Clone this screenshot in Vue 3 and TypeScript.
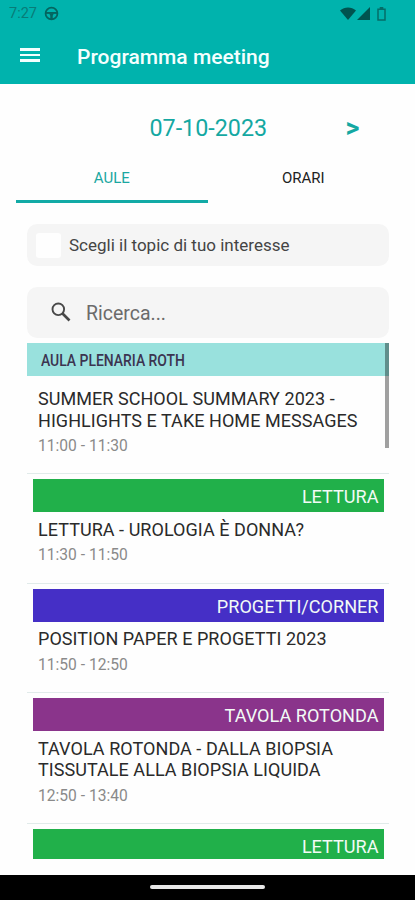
<script setup lang="ts">
import { ref } from 'vue'

interface Session {
  category?: string
  tone?: 'green' | 'blue' | 'purple'
  title: string[]
  time: string
}

const date = ref('07-10-2023')
const activeTab = ref('AULE')
const query = ref('')
const tabs = ['AULE', 'ORARI']

const sessions: Session[] = [
  { title: ['SUMMER SCHOOL SUMMARY 2023 -', 'HIGHLIGHTS E TAKE HOME MESSAGES'], time: '11:00 - 11:30' },
  { category: 'LETTURA', tone: 'green', title: ['LETTURA - UROLOGIA È DONNA?'], time: '11:30 - 11:50' },
  { category: 'PROGETTI/CORNER', tone: 'blue', title: ['POSITION PAPER E PROGETTI 2023'], time: '11:50 - 12:50' },
  { category: 'TAVOLA ROTONDA', tone: 'purple', title: ['TAVOLA ROTONDA - DALLA BIOPSIA', 'TISSUTALE ALLA BIOPSIA LIQUIDA'], time: '12:50 - 13:40' },
  { category: 'LETTURA', tone: 'green', title: [], time: '' },
]
</script>

<template>
  <div class="screen">
    <header class="top">
      <div class="status">
        <span class="clock">7:27</span>
        <svg class="wheel" viewBox="0 0 16 16" width="15" height="15">
          <circle cx="8" cy="8" r="6.3" fill="none" stroke="currentColor" stroke-width="1.9" />
          <path d="M2 7.4h12" fill="none" stroke="currentColor" stroke-width="2" />
          <path d="M5.5 8h5L9.3 10.5V14H6.7V10.5Z" fill="currentColor" />
        </svg>
        <span class="spacer"></span>
        <svg class="wifi" viewBox="0 0 16 13" width="16" height="13">
          <path d="M0 3.6C4.6-.6 11.4-.6 16 3.6L8 13Z" fill="currentColor" />
        </svg>
        <svg class="signal" viewBox="0 0 13 13" width="13" height="13">
          <path d="M13 0V13H0Z" fill="currentColor" />
        </svg>
        <svg class="battery" viewBox="0 0 9 14" width="9" height="14">
          <path d="M1 2.2H8V13H1Z" fill="none" stroke="currentColor" stroke-width="1.5" />
          <path d="M2.7 0H6.3V2H2.7Z" fill="currentColor" />
        </svg>
      </div>
      <div class="bar">
        <button class="menu" aria-label="Menu"><i></i><i></i><i></i></button>
        <h1>Programma meeting</h1>
      </div>
    </header>

    <main>
      <div class="date-row">
        <span class="date">{{ date }}</span>
        <button class="next">&gt;</button>
      </div>

      <nav class="tabs">
        <button v-for="t in tabs" :key="t" class="tab" :class="{ active: t === activeTab }" @click="activeTab = t">
          {{ t }}
        </button>
      </nav>

      <div class="topic">
        <span class="box"></span>
        <span class="topic-text">Scegli il topic di tuo interesse</span>
      </div>

      <label class="search">
        <svg viewBox="0 0 20 20" width="20" height="20">
          <circle cx="7.3" cy="7.3" r="5.8" fill="none" stroke="currentColor" stroke-width="1.9" />
          <path d="M11.5 11.5L18.5 18.5" stroke="currentColor" stroke-width="2.6" />
        </svg>
        <input v-model="query" placeholder="Ricerca..." />
      </label>

      <section class="list">
        <div class="room"><span>AULA PLENARIA ROTH</span></div>
        <article v-for="(s, i) in sessions" :key="i" class="session" :class="{ first: !s.category }">
          <div v-if="s.category" class="category" :class="s.tone">{{ s.category }}</div>
          <div class="title">
            <div v-for="(line, n) in s.title" :key="n">{{ line }}</div>
          </div>
          <div class="time">{{ s.time }}</div>
        </article>
        <div class="scrollbar"></div>
      </section>
    </main>

    <footer class="system"><span></span></footer>
  </div>
</template>

<style>
body {
  margin: 0;
  background: #fff;
}
</style>

<style scoped>
.screen {
  width: 415px;
  height: 900px;
  display: flex;
  flex-direction: column;
  overflow: hidden;
  background: #fefefe;
  font-family: Roboto, "Liberation Sans", sans-serif;
}
button {
  border: 0;
  padding: 0;
  background: none;
  font-family: inherit;
}
.top {
  height: 84px;
  flex: none;
  background: #00b3ad;
}
.status {
  display: flex;
  align-items: center;
  height: 27px;
  padding: 0 29px 0 9px;
  color: #00534f;
}
.clock {
  font-size: 14.5px;
  color: #087c78;
  width: 35px;
}
.wheel { color: #04655f; }
.spacer { flex: 1; }
.signal { margin-left: 1px; }
.battery { margin-left: 7px; color: #046d68; }
.bar {
  display: flex;
  align-items: center;
  height: 57px;
  padding-left: 20px;
}
.menu {
  display: flex;
  flex-direction: column;
  gap: 3px;
  width: 20px;
  margin-right: 37px;
  margin-bottom: 1px;
}
.menu i {
  height: 2.6px;
  background: #f2fffe;
}
h1 {
  margin: 2px 0 0;
  font-size: 21px;
  font-weight: 500;
  color: #f4fffe;
  white-space: nowrap;
}
main {
  flex: 1;
  min-height: 0;
  display: flex;
  flex-direction: column;
}
.date-row {
  display: grid;
  grid-template-columns: 1fr 118px 1fr;
  align-items: center;
  height: 70px;
  padding-top: 17px;
  box-sizing: border-box;
  color: #14a8a2;
}
.date {
  grid-column: 2;
  padding-left: 1px;
  font-size: 23.3px;
  white-space: nowrap;
}
.next {
  justify-self: start;
  margin-left: 79px;
  font-size: 27px;
  font-weight: 700;
  color: #14a8a2;
}
.tabs {
  display: flex;
  height: 49px;
  padding: 0 16px;
}
.tab {
  width: 192px;
  padding-top: 2px;
  box-sizing: border-box;
  border-bottom: 3px solid transparent;
  font-size: 15px;
  color: #222;
}
.tab.active {
  color: #1ba7a1;
  border-color: #12aaa6;
}
.topic {
  display: flex;
  align-items: center;
  height: 42px;
  margin: 21px 26px 0 27px;
  border-radius: 10px;
  background: #f5f5f5;
}
.box {
  width: 25px;
  height: 25px;
  margin: 0 8px 0 9px;
  border-radius: 3px;
  background: #fefefe;
}
.topic-text {
  font-size: 17px;
  color: #444;
  white-space: nowrap;
}
.search {
  display: flex;
  align-items: center;
  height: 51px;
  margin: 20.5px 26px 5.5px 27px;
  border-radius: 10px;
  background: #f5f5f5;
  color: #484848;
}
.search svg { margin-left: 24px; }
.search input {
  width: 250px;
  margin-left: 15px;
  padding: 2px 0 0;
  border: 0;
  outline: 0;
  background: none;
  font: 19.5px Roboto, sans-serif;
}
.search input::placeholder { color: #6b6b6b; opacity: 1; }
.list {
  position: relative;
  height: 516px;
  margin: 0 26px 0 27px;
  overflow: hidden;
}
.room {
  height: 33px;
  padding-left: 14px;
  line-height: 35px;
  background: #99e1dd;
  color: #3c3450;
  font-size: 16px;
  font-weight: 500;
  white-space: nowrap;
}
.room span {
  display: inline-block;
  transform: scaleX(0.87);
  transform-origin: left;
}
.session {
  padding: 5px 5.5px 17.5px;
  border-bottom: 1px solid #e1ebea;
}
.session.first { padding: 12px 5.5px 17px; }
.category {
  height: 33px;
  padding-right: 5px;
  line-height: 35px;
  text-align: right;
  font-size: 18.1px;
  color: #f2fbf6;
}
.green { background: #21b04a; }
.blue { background: #452fc6; }
.purple { background: #8a348b; }
.title {
  padding: 6.5px 0 0 5.5px;
  font-size: 18px;
  line-height: 21.5px;
  letter-spacing: 0.05px;
  color: #2a2a2a;
  white-space: nowrap;
}
.first .title { padding-top: 0; }
.time {
  padding: 5px 0 0 5.5px;
  font-size: 15.6px;
  line-height: 20px;
  color: #8a8a8a;
}
.scrollbar {
  position: absolute;
  top: 0;
  right: 0;
  width: 4px;
  height: 105px;
  background: rgba(0, 0, 0, 0.37);
}
.system {
  flex: none;
  height: 25px;
  display: flex;
  justify-content: center;
  background: #000;
}
.system span {
  width: 115px;
  height: 4px;
  margin-top: 10px;
  border-radius: 2px;
  background: #e8e8e8;
}
</style>
